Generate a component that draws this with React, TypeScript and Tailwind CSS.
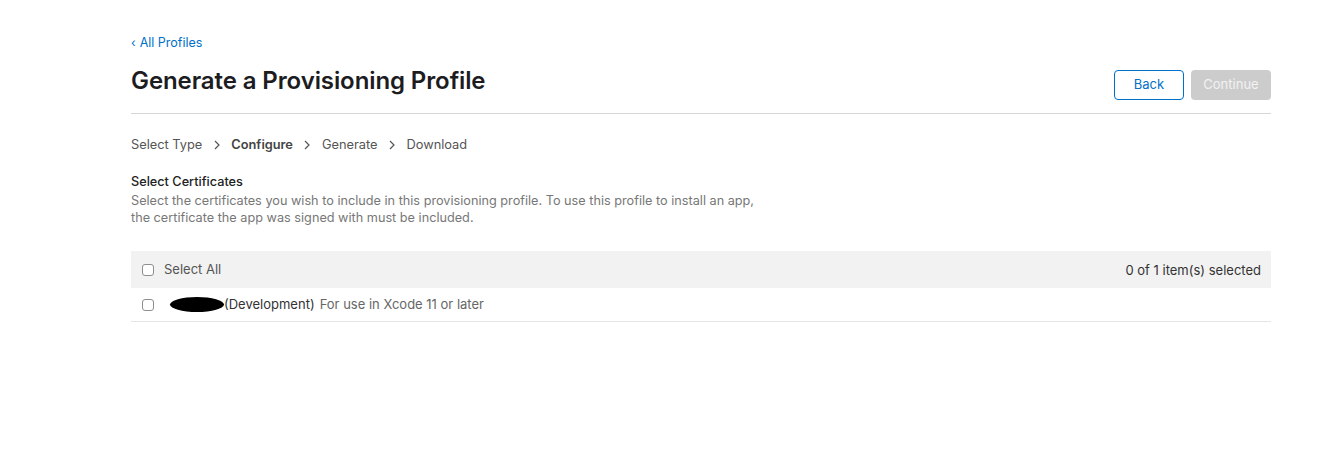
import React from "react";

function Checkbox() {
  return <span className="inline-block w-[12px] h-[12px] rounded-[3px] border border-[#8e8e8e] bg-white shrink-0" />;
}

function Chevron() {
  return (
    <svg width="6" height="10" viewBox="0 0 6 10" className="mx-[11.5px]">
      <path d="M1 1 L5 5 L1 9" fill="none" stroke="#555" strokeWidth="1.2" />
    </svg>
  );
}

export default function App() {
  return (
    <div className="w-[1344px] h-[456px] bg-white text-[#333] overflow-hidden" style={{ fontFamily: "Inter, 'Noto Sans', sans-serif" }}>
      <div className="ml-[131px] w-[1140px] pt-[35px]">
        <a className="text-[12.5px] text-[#0070c9] leading-[16px] flex items-center gap-[4px]">
          <span className="text-[12px]">‹</span>All Profiles
        </a>
        <div className="flex items-center justify-between mt-[15px] h-[30px]">
          <h1 className="text-[24px] font-semibold text-[#1d1d1f] tracking-[-0.1px] leading-[30px]">Generate a Provisioning Profile</h1>
          <div className="flex gap-[7px] mt-[7px]">
            <button className="w-[70px] h-[30px] rounded-[4px] border border-[#0070c9] text-[#0070c9] text-[13px] bg-white">Back</button>
            <button className="w-[80px] h-[30px] rounded-[4px] bg-[#cccccc] text-[#f2f2f2] text-[13px]">Continue</button>
          </div>
        </div>
        <div className="mt-[17px] border-t border-[#d6d6d6]" />
        <div className="flex items-center mt-[22px] text-[12.8px] text-[#555] leading-[18px]">
          <span>Select Type</span>
          <Chevron />
          <span className="font-semibold text-[#444]">Configure</span>
          <Chevron />
          <span>Generate</span>
          <Chevron />
          <span>Download</span>
        </div>
        <div className="mt-[19px] text-[12.7px] font-medium text-[#222] leading-[17px]">Select Certificates</div>
        <p className="mt-[2px] text-[12.7px] text-[#777] leading-[17px] w-[630px]">
          Select the certificates you wish to include in this provisioning profile. To use this profile to install an app, the certificate the app was signed with must be included.
        </p>
        <div className="mt-[25px]">
          <div className="h-[37px] bg-[#f2f2f2] flex items-center justify-between pl-[11px] pr-[10px] text-[13px] text-[#555]">
            <div className="flex items-center gap-[10px]">
              <Checkbox />
              <span>Select All</span>
            </div>
            <span className="text-[#333] mt-[3px]">0 of 1 item(s) selected</span>
          </div>
          <div className="h-[34px] border-b border-[#e5e5e5] flex items-center pl-[11px] text-[13px]">
            <Checkbox />
            <span className="ml-[16px] inline-block w-[54px] h-[15px] rounded-[50%] bg-black" />
            <span className="text-[#333]">(Development)</span>
            <span className="ml-[5px] text-[#666]">For use in Xcode 11 or later</span>
          </div>
        </div>
      </div>
    </div>
  );
}
